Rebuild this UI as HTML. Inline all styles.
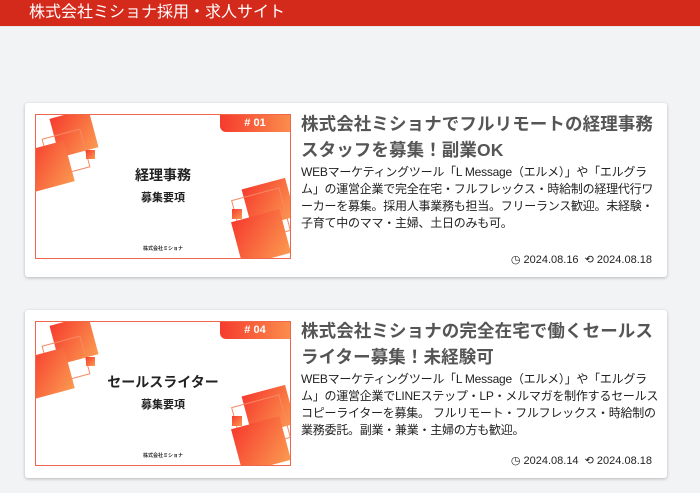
<!DOCTYPE html>
<html><head><meta charset="utf-8"><style>
*{margin:0;padding:0;box-sizing:border-box}
body{width:700px;height:493px;background:#f2f3f5;font-family:"Liberation Sans","Noto Sans CJK JP",sans-serif;overflow:hidden;position:relative}
.hdr{height:27px;background:#d42a1c;color:#fff;font-size:16px;line-height:25px;padding-left:29px;border-bottom:1px solid #e8e8e8}
.card{position:absolute;left:25px;width:642px;background:#fff;border-radius:3px;box-shadow:0 1px 3px rgba(0,0,0,.25)}
.img{position:absolute;left:10px;top:11px;width:256px;height:145px;border:1px solid #f0664a;overflow:hidden;background:#fff}
.sq{position:absolute;background:linear-gradient(135deg,#f63b2e,#fb9a50)}
.ol{position:absolute;border:1px solid #f78a64}
.tag{position:absolute;right:0;top:0;width:70px;height:17px;background:linear-gradient(90deg,#f53b2e,#fb8c4c);border-bottom-left-radius:6px;color:#fff;font-size:11px;font-weight:bold;text-align:center;line-height:17px}
.t1{position:absolute;left:0;right:0;top:50px;text-align:center;font-weight:bold;font-size:14px;color:#222}
.t2{position:absolute;left:0;right:0;top:74px;text-align:center;font-weight:bold;font-size:11px;color:#222}
.t3{position:absolute;left:0;right:0;top:130px;text-align:center;font-size:5px;font-weight:bold;color:#333}
.ttl{position:absolute;left:276px;top:8px;width:356px;font-size:17.5px;font-weight:bold;line-height:26px;color:#555;letter-spacing:.1px}
.txt{position:absolute;left:276px;top:61px;width:358px;font-size:12px;line-height:17px;color:#222;letter-spacing:-.25px}
.dt{position:absolute;right:15px;font-size:11px;color:#222}
</style></head><body>
<div class="hdr">株式会社ミショナ採用・求人サイト</div>

<div class="card" style="top:103px;height:174px">
 <div class="img">
  <div class="sq" style="left:18px;top:-2px;width:40px;height:40px;transform:rotate(-15deg)"></div>
  <div class="ol" style="left:10px;top:18px;width:40px;height:40px;transform:rotate(-15deg)"></div>
  <div class="sq" style="left:-6px;top:30px;width:40px;height:42px;transform:rotate(-15deg)"></div>
  <div class="sq" style="left:50px;top:35px;width:9px;height:9px"></div>
  <div class="tag"># 01</div>
  <div class="t1">経理事務</div><div class="t2">募集要項</div><div class="t3">株式会社ミショナ</div>
  <div class="sq" style="left:210px;top:68px;width:45px;height:40px;transform:rotate(-15deg)"></div>
  <div class="ol" style="left:200px;top:78px;width:50px;height:45px;transform:rotate(-15deg)"></div>
  <div class="sq" style="left:200px;top:100px;width:50px;height:45px;transform:rotate(-15deg)"></div>
  <div class="sq" style="left:196px;top:94px;width:10px;height:10px"></div>
 </div>
 <div class="ttl">株式会社ミショナでフルリモートの経理事務スタッフを募集！副業OK</div>
 <div class="txt">WEBマーケティングツール「L Message（エルメ）」や「エルグラム」の運営企業で完全在宅・フルフレックス・時給制の経理代行ワーカーを募集。採用人事業務も担当。フリーランス歓迎。未経験・子育て中のママ・主婦、土日のみも可。</div>
 <div class="dt" style="top:150px">◷ 2024.08.16 &nbsp;⟲ 2024.08.18</div>
</div>

<div class="card" style="top:310px;height:168px">
 <div class="img">
  <div class="sq" style="left:18px;top:-2px;width:40px;height:40px;transform:rotate(-15deg)"></div>
  <div class="ol" style="left:10px;top:18px;width:40px;height:40px;transform:rotate(-15deg)"></div>
  <div class="sq" style="left:-6px;top:30px;width:40px;height:42px;transform:rotate(-15deg)"></div>
  <div class="sq" style="left:50px;top:35px;width:9px;height:9px"></div>
  <div class="tag"># 04</div>
  <div class="t1">セールスライター</div><div class="t2">募集要項</div><div class="t3">株式会社ミショナ</div>
  <div class="sq" style="left:210px;top:68px;width:45px;height:40px;transform:rotate(-15deg)"></div>
  <div class="ol" style="left:200px;top:78px;width:50px;height:45px;transform:rotate(-15deg)"></div>
  <div class="sq" style="left:200px;top:100px;width:50px;height:45px;transform:rotate(-15deg)"></div>
  <div class="sq" style="left:196px;top:94px;width:10px;height:10px"></div>
 </div>
 <div class="ttl">株式会社ミショナの完全在宅で働くセールスライター募集！未経験可</div>
 <div class="txt">WEBマーケティングツール「L Message（エルメ）」や「エルグラム」の運営企業でLINEステップ・LP・メルマガを制作するセールスコピーライターを募集。 フルリモート・フルフレックス・時給制の業務委託。副業・兼業・主婦の方も歓迎。</div>
 <div class="dt" style="top:144px">◷ 2024.08.14 &nbsp;⟲ 2024.08.18</div>
</div>
</body></html>
